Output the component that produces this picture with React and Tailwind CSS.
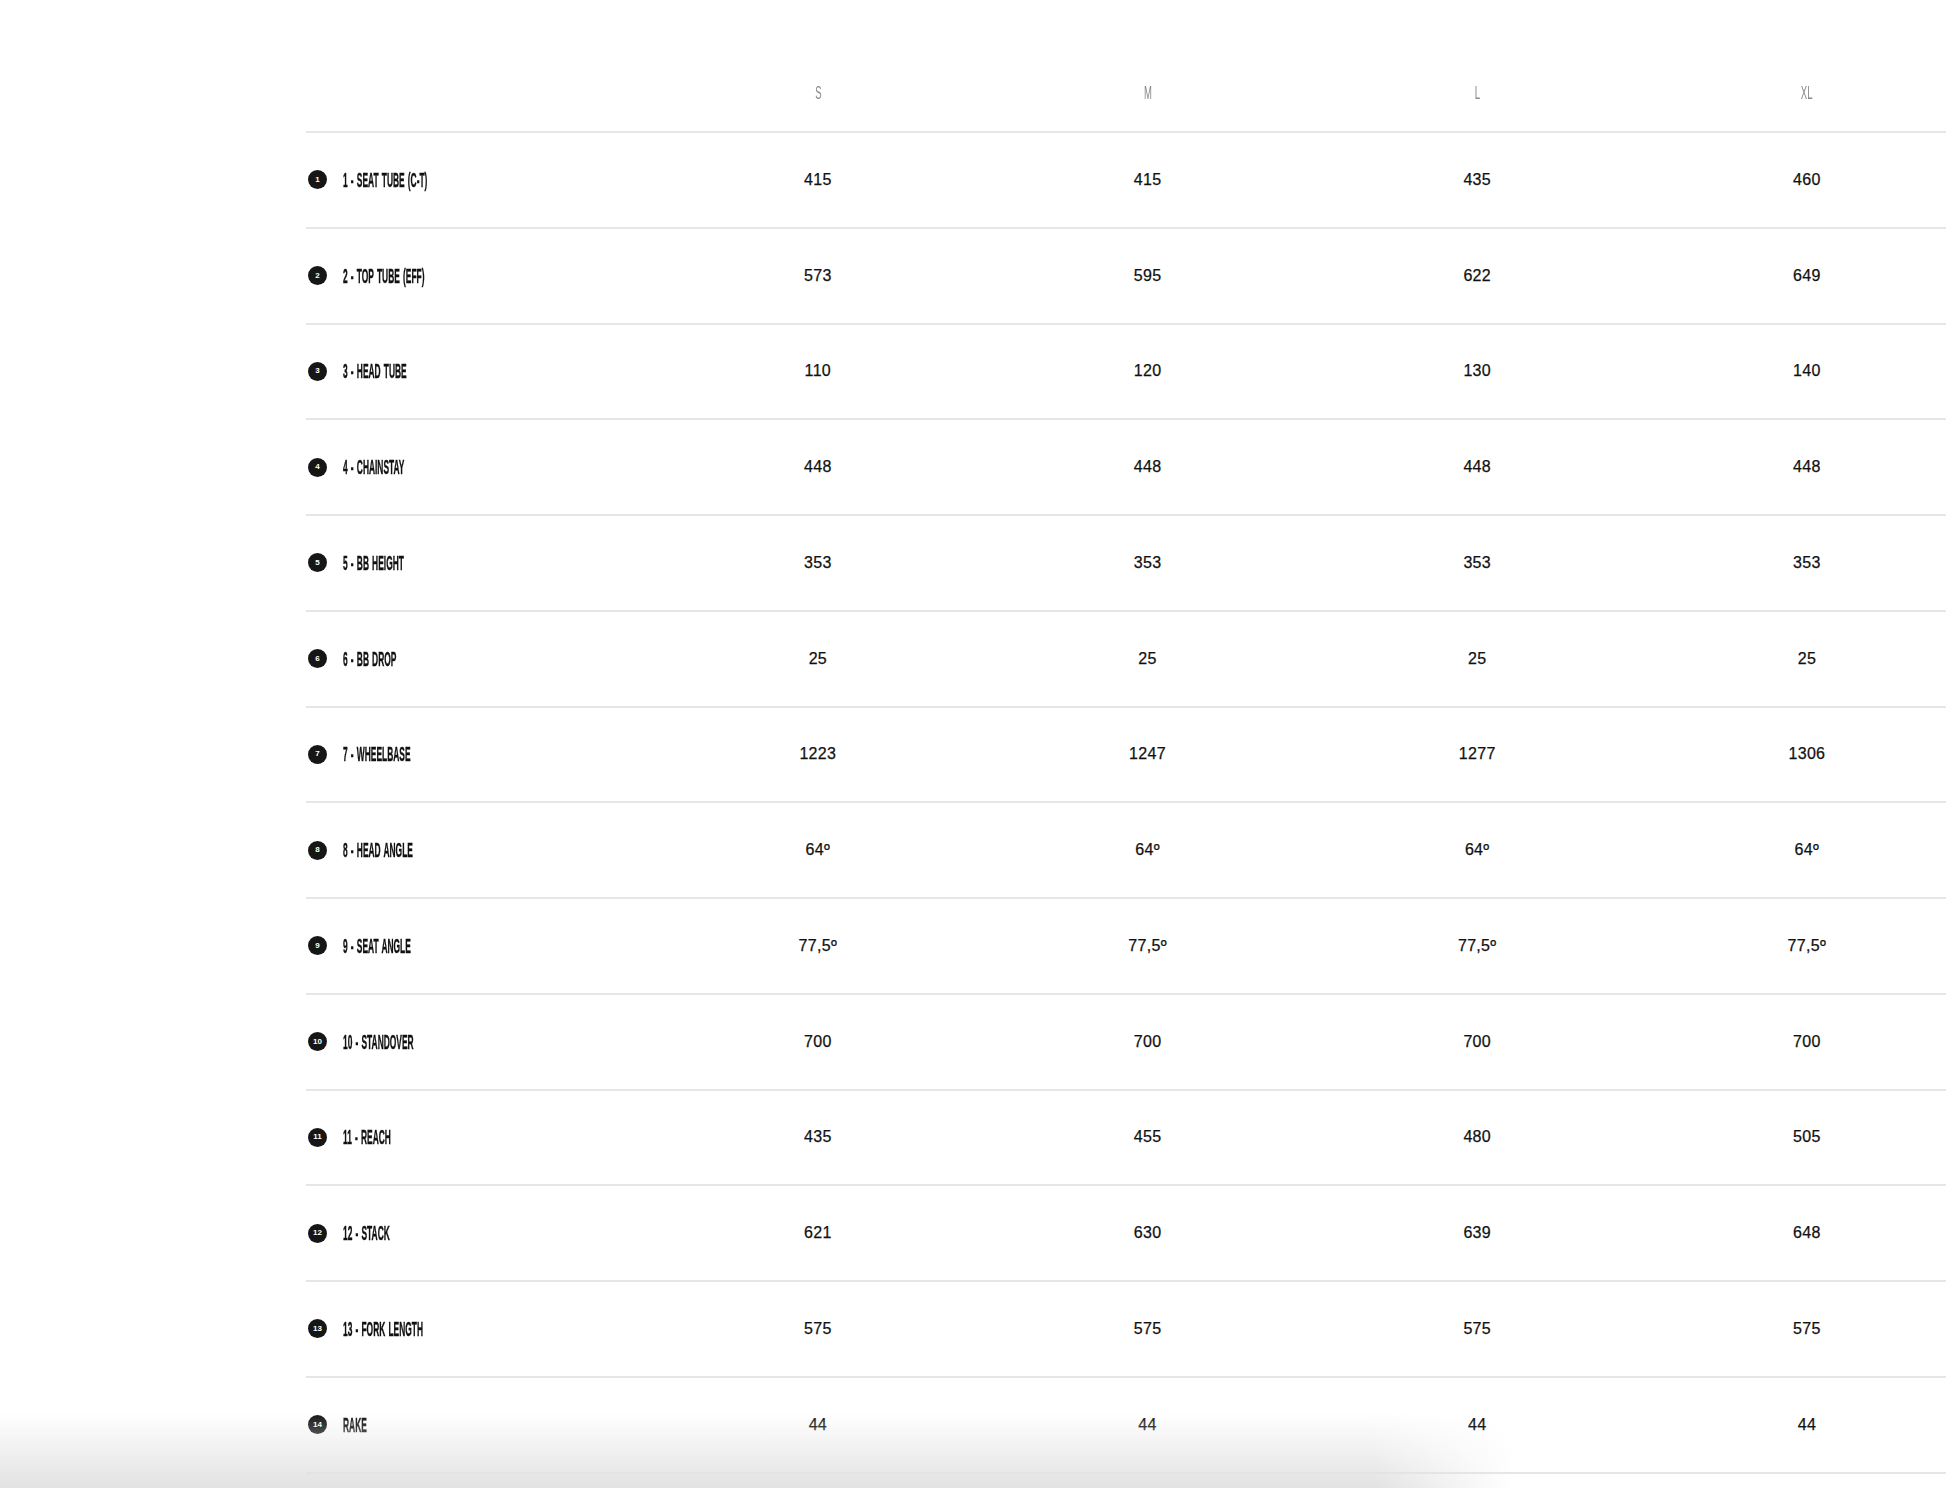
const SIZES = ["S", "M", "L", "XL"];

const ROWS = [
  { n: 1, label: "1 - SEAT TUBE (C-T)", v: ["415", "415", "435", "460"] },
  { n: 2, label: "2 - TOP TUBE (EFF)", v: ["573", "595", "622", "649"] },
  { n: 3, label: "3 - HEAD TUBE", v: ["110", "120", "130", "140"] },
  { n: 4, label: "4 - CHAINSTAY", v: ["448", "448", "448", "448"] },
  { n: 5, label: "5 - BB HEIGHT", v: ["353", "353", "353", "353"] },
  { n: 6, label: "6 - BB DROP", v: ["25", "25", "25", "25"] },
  { n: 7, label: "7 - WHEELBASE", v: ["1223", "1247", "1277", "1306"] },
  { n: 8, label: "8 - HEAD ANGLE", v: ["64º", "64º", "64º", "64º"] },
  { n: 9, label: "9 - SEAT ANGLE", v: ["77,5º", "77,5º", "77,5º", "77,5º"] },
  { n: 10, label: "10 - STANDOVER", v: ["700", "700", "700", "700"] },
  { n: 11, label: "11 - REACH", v: ["435", "455", "480", "505"] },
  { n: 12, label: "12 - STACK", v: ["621", "630", "639", "648"] },
  { n: 13, label: "13 - FORK LENGTH", v: ["575", "575", "575", "575"] },
  { n: 14, label: "RAKE", v: ["44", "44", "44", "44"] },
];

const GRID = "grid grid-cols-[347px_repeat(4,329.7px)]";

const App = () => {
  return (
    <div className="relative h-[1488px] w-[1946px] overflow-hidden bg-white font-['Liberation_Sans',Arial,sans-serif]">
      <div className="pl-[306px]">
        {/* Cabecera de tallas */}
        <div className={`${GRID} h-[133px] items-end border-b-2 border-[#e6e6e6] pb-[29px]`}>
          <div />
          {SIZES.map((s) => (
            <div key={s} className="flex justify-center">
              <span className="inline-block scale-x-[0.5] text-[19px] leading-none text-[#8a8a8a]">
                {s}
              </span>
            </div>
          ))}
        </div>

        {/* Filas de geometría */}
        {ROWS.map((row) => (
          <div
            key={row.n}
            className={`${GRID} h-[95.76px] items-center border-b-2 border-[#e6e6e6]`}
          >
            <div className="flex items-center pl-[2px]">
              <span className="flex h-[19px] w-[19px] shrink-0 items-center justify-center rounded-full bg-[#161616] text-[8px] font-bold leading-none text-white">
                {row.n}
              </span>
              <span className="ml-[16px] inline-block origin-left scale-x-[0.42] whitespace-nowrap text-[20px] font-bold leading-none text-[#111] [word-spacing:2px] [-webkit-text-stroke:0.4px_#111]">
                {row.label}
              </span>
            </div>
            {row.v.map((val, i) => (
              <div
                key={i}
                className="text-center text-[16px] leading-none tracking-[0.02em] text-[#111] [-webkit-text-stroke:0.25px_#111]"
              >
                {val}
              </div>
            ))}
          </div>
        ))}
      </div>

      {/* Sombra inferior */}
      <div className="pointer-events-none absolute bottom-0 left-0 h-[75px] w-[1560px] bg-gradient-to-t from-[#e2e2e2] to-transparent [mask-image:linear-gradient(to_right,black_88%,transparent_97%)]" />
    </div>
  );
};

export default App;
